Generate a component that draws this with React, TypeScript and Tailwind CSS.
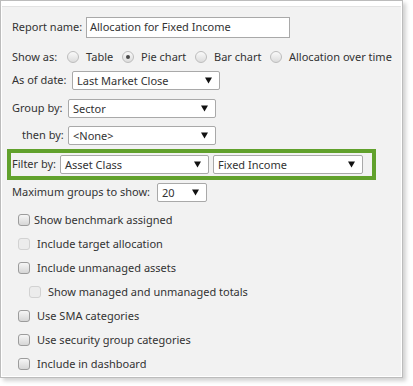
const font = { fontFamily: '"Noto Sans", "Open Sans", sans-serif' };

function Arrow() {
  return (
    <svg width="7" height="7" viewBox="0 0 7 7" className="shrink-0">
      <polygon points="0,0.5 7,0.5 3.5,6.5" fill="#111" />
    </svg>
  );
}

function Select({ value, width }: { value: string; width: string }) {
  return (
    <div
      className={`${width} h-[19px] shrink-0 bg-white border border-[#a9a9a9] rounded-[2px] flex items-center justify-between pl-[4px] pr-[7px]`}
    >
      <span className="leading-none text-[#333] whitespace-nowrap">{value}</span>
      <Arrow />
    </div>
  );
}

function Radio({ checked }: { checked?: boolean }) {
  return (
    <span className="w-[12px] h-[12px] shrink-0 rounded-full border border-[#bdbdbd] bg-gradient-to-b from-[#fafafa] to-[#dcdcdc] flex items-center justify-center">
      {checked && <span className="w-[4px] h-[4px] rounded-full bg-[#4a4a4a]" />}
    </span>
  );
}

function Check({ disabled }: { disabled?: boolean }) {
  return (
    <span
      className={
        disabled
          ? "w-[12px] h-[12px] shrink-0 rounded-[3px] border border-[#d2d2d2] bg-[#ececec]"
          : "w-[12px] h-[12px] shrink-0 rounded-[3px] border border-[#9c9c9c] bg-gradient-to-b from-[#f6f6f6] to-[#d6d6d6]"
      }
    />
  );
}

const checks = [
  { label: "Show benchmark assigned", indent: "pl-[6px]", gap: "gap-[4px]" },
  { label: "Include target allocation", indent: "pl-[6px]", gap: "gap-[7px]", disabled: true },
  { label: "Include unmanaged assets", indent: "pl-[6px]", gap: "gap-[7px]" },
  { label: "Show managed and unmanaged totals", indent: "pl-[17px]", gap: "gap-[7px]", disabled: true },
  { label: "Use SMA categories", indent: "pl-[6px]", gap: "gap-[7px]" },
  { label: "Use security group categories", indent: "pl-[6px]", gap: "gap-[7px]" },
  { label: "Include in dashboard", indent: "pl-[6px]", gap: "gap-[7px]" },
];

export default function App() {
  return (
    <div className="w-[413px] h-[386px] bg-white text-[11px] text-[#333]" style={font}>
      <div className="w-[403px] h-[378px] border border-[#bcbcbc] bg-white shadow-[3px_3px_4px_rgba(0,0,0,0.18)] pt-[5px] px-[1px] pb-[1px]">
        <div className="h-full bg-[#f2f2f2] border-t border-[#e2e2e2] pl-[10px] pt-[10px] overflow-hidden">
          {/* Report name */}
          <div className="h-[21px] flex items-center">
            <span className="w-[74px] shrink-0 whitespace-nowrap">Report name:</span>
            <div className="w-[204px] h-[21px] bg-white border border-[#a9a9a9] flex items-center pl-[3px] whitespace-nowrap">
              Allocation for Fixed Income
            </div>
          </div>

          {/* Show as */}
          <div className="mt-[7px] h-[24px] flex items-center whitespace-nowrap">
            <span className="w-[55px] shrink-0">Show as:</span>
            <div className="w-[55px] flex items-center gap-[7px] shrink-0">
              <Radio />
              <span>Table</span>
            </div>
            <div className="w-[73px] flex items-center gap-[7px] shrink-0">
              <Radio checked />
              <span>Pie chart</span>
            </div>
            <div className="w-[75px] flex items-center gap-[7px] shrink-0">
              <Radio />
              <span>Bar chart</span>
            </div>
            <div className="flex items-center gap-[7px] shrink-0">
              <Radio />
              <span>Allocation over time</span>
            </div>
          </div>

          {/* As of date */}
          <div className="mt-[2px] h-[19px] flex items-center whitespace-nowrap">
            <span className="w-[60px] shrink-0">As of date:</span>
            <Select value="Last Market Close" width="w-[148px]" />
          </div>

          {/* Group by */}
          <div className="mt-[9px] h-[19px] flex items-center whitespace-nowrap">
            <span className="w-[56px] shrink-0">Group by:</span>
            <Select value="Sector" width="w-[148px]" />
          </div>

          {/* then by */}
          <div className="mt-[8px] h-[19px] flex items-center whitespace-nowrap">
            <span className="w-[56px] shrink-0 pl-[10px]">then by:</span>
            <Select value="<None>" width="w-[148px]" />
          </div>

          {/* Filter by */}
          <div className="mt-[4px] -ml-[5px] w-[369px] h-[31px] border-[4px] border-[#61a12c] flex items-center pl-[1px] whitespace-nowrap">
            <span className="w-[48px] shrink-0">Filter by:</span>
            <Select value="Asset Class" width="w-[149px]" />
            <div className="w-[4px] shrink-0" />
            <Select value="Fixed Income" width="w-[150px]" />
          </div>

          {/* Max groups */}
          <div className="mt-[3px] h-[19px] flex items-center whitespace-nowrap">
            <span className="w-[145px] shrink-0">Maximum groups to show:</span>
            <Select value="20" width="w-[50px]" />
          </div>

          {/* Checkboxes */}
          <div className="mt-[6px] flex flex-col">
            {checks.map((c) => (
              <div key={c.label} className={`h-[24px] flex items-center ${c.indent} ${c.gap}`}>
                <Check disabled={c.disabled} />
                <span className="whitespace-nowrap">{c.label}</span>
              </div>
            ))}
          </div>
        </div>
      </div>
    </div>
  );
}
